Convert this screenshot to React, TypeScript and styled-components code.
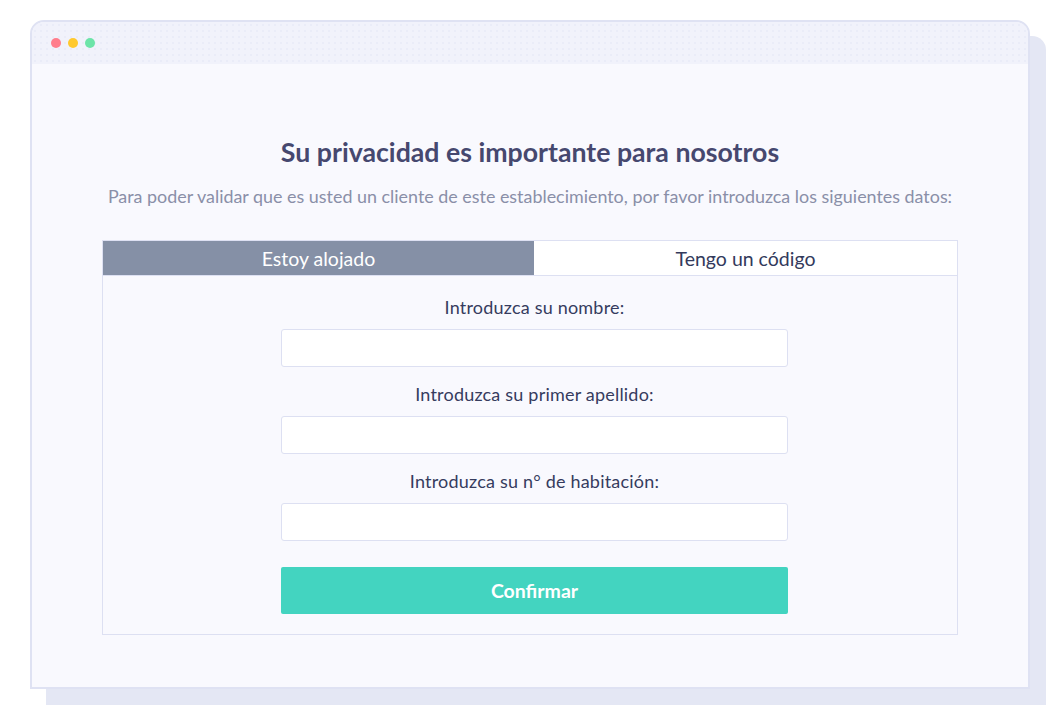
import React from 'react'
import styled, { createGlobalStyle } from 'styled-components'

const GlobalStyle = createGlobalStyle`
  body {
    margin: 0;
    background: #ffffff;
    font-family: Lato, "Open Sans", sans-serif;
  }
`

const Page = styled.div`
  box-sizing: border-box;
  min-height: 100vh;
  padding: 20px 0 0 30px;
`

const Window = styled.div`
  box-sizing: border-box;
  width: 1000px;
  height: 669px;
  border: 2px solid #dfe2f3;
  border-radius: 14px 14px 0 0;
  background: #f9f9fe;
  box-shadow: 16px 16px 0 #e4e7f4;
  display: flex;
  flex-direction: column;
`

const TitleBar = styled.div`
  height: 42px;
  display: flex;
  align-items: center;
  gap: 7px;
  padding-left: 19px;
  border-radius: 12px 12px 0 0;
  background-color: #f1f2fb;
  background-image: radial-gradient(#eaecf8 1px, transparent 1px);
  background-size: 6px 6px;
`

const Dot = styled.span<{ $color: string }>`
  width: 10px;
  height: 10px;
  border-radius: 50%;
  background: ${p => p.$color};
`

const Content = styled.div`
  padding: 72px 70px 0;
  display: flex;
  flex-direction: column;
  align-items: center;
`

const Title = styled.h1`
  margin: 0;
  font-size: 26.7px;
  line-height: 32px;
  font-weight: 700;
  color: #46486f;
`

const Subtitle = styled.p`
  margin: 16px 0 0;
  font-size: 17.9px;
  line-height: 24px;
  color: #8a8fa8;
`

const Panel = styled.div`
  box-sizing: border-box;
  width: 856px;
  margin-top: 32px;
  border: 1px solid #dde0f2;
`

const Tabs = styled.div`
  display: grid;
  grid-template-columns: 431px 1fr;
  height: 34px;
  border-bottom: 1px solid #dde0f2;
`

const Tab = styled.div<{ $active?: boolean }>`
  display: flex;
  align-items: center;
  justify-content: center;
  font-size: 19.5px;
  color: ${p => (p.$active ? '#ffffff' : '#333a5c')};
  background: ${p => (p.$active ? '#8590a6' : '#ffffff')};
`

const Form = styled.div`
  display: flex;
  flex-direction: column;
  padding: 20px 169px 20px 178px;
`

const Field = styled.div`
  display: flex;
  flex-direction: column;
  align-items: center;
  gap: 11px;
  margin-bottom: 16px;
`

const Label = styled.label`
  font-size: 18px;
  line-height: 22px;
  letter-spacing: 0.2px;
  color: #363c5e;
`

const Input = styled.input`
  box-sizing: border-box;
  width: 100%;
  height: 38px;
  border: 1px solid #dde0f2;
  border-radius: 3px;
  background: #ffffff;
  outline: none;
`

const Confirm = styled.button`
  margin-top: 10px;
  height: 47px;
  border: none;
  border-radius: 2px;
  background: #43d4c0;
  color: #ffffff;
  font-family: Lato, sans-serif;
  font-size: 19.5px;
  font-weight: 700;
  cursor: pointer;
`

const fields = [
  'Introduzca su nombre:',
  'Introduzca su primer apellido:',
  'Introduzca su n° de habitación:',
]

export default function App() {
  return (
    <Page>
      <GlobalStyle />
      <Window>
        <TitleBar>
          <Dot $color="#ff7d8c" />
          <Dot $color="#ffc92e" />
          <Dot $color="#6ce4a8" />
        </TitleBar>
        <Content>
          <Title>Su privacidad es importante para nosotros</Title>
          <Subtitle>
            Para poder validar que es usted un cliente de este establecimiento, por favor introduzca los siguientes datos:
          </Subtitle>
          <Panel>
            <Tabs>
              <Tab $active>Estoy alojado</Tab>
              <Tab>Tengo un código</Tab>
            </Tabs>
            <Form>
              {fields.map(label => (
                <Field key={label}>
                  <Label>{label}</Label>
                  <Input type="text" />
                </Field>
              ))}
              <Confirm>Confirmar</Confirm>
            </Form>
          </Panel>
        </Content>
      </Window>
    </Page>
  )
}
